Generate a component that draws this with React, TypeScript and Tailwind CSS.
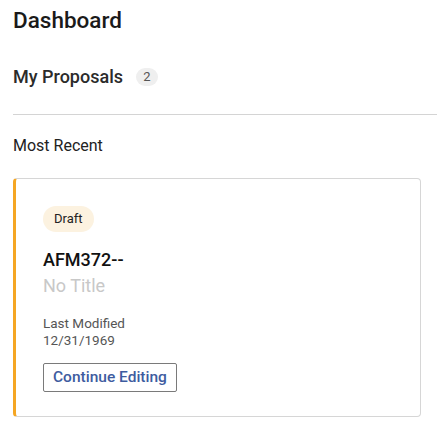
export default function App() {
  return (
    <div className="min-h-screen bg-white pl-[13px] pt-[7px] font-['Roboto',sans-serif] text-[#1a1a1a]">
      <h1 className="text-[22.5px] font-medium leading-[26px]">Dashboard</h1>

      <div className="mt-[32px] flex items-center gap-[13px]">
        <h2 className="text-[18px] font-medium leading-[24px] text-[#2b2b2b]">My Proposals</h2>
        <span className="flex h-[18px] w-[22px] items-center justify-center rounded-full bg-[#efefef] text-[13px] text-[#555]">
          2
        </span>
      </div>

      <hr className="mt-[25px] border-t border-[#d4d4d4]" />

      <h3 className="mt-[21px] text-[16px] leading-[20px] text-[#222]">Most Recent</h3>

      <div className="mr-[16px] mt-[22px] rounded-[4px] border border-l-[3px] border-[#d6d6d6] border-l-[#f5a623] pb-[24px] pl-[27px] pt-[27px]">
        <span className="inline-flex h-[26px] items-center rounded-full bg-[#fcf2e0] px-[11px] text-[13px] text-[#222]">
          Draft
        </span>
        <div className="mt-[15px] text-[18px] font-medium leading-[26px] text-[#111]">AFM372--</div>
        <div className="text-[18px] leading-[26px] text-[#c8c8c8]">No Title</div>
        <div className="mt-[16px] text-[13.5px] leading-[17px] text-[#555]">
          <div>Last Modified</div>
          <div>12/31/1969</div>
        </div>
        <button className="mt-[14px] rounded-[2px] border border-[#7a7a7a] bg-white px-[9px] py-[4px] text-[15.5px] font-medium leading-[19px] text-[#3e5c9f]">
          Continue Editing
        </button>
      </div>
    </div>
  );
}
